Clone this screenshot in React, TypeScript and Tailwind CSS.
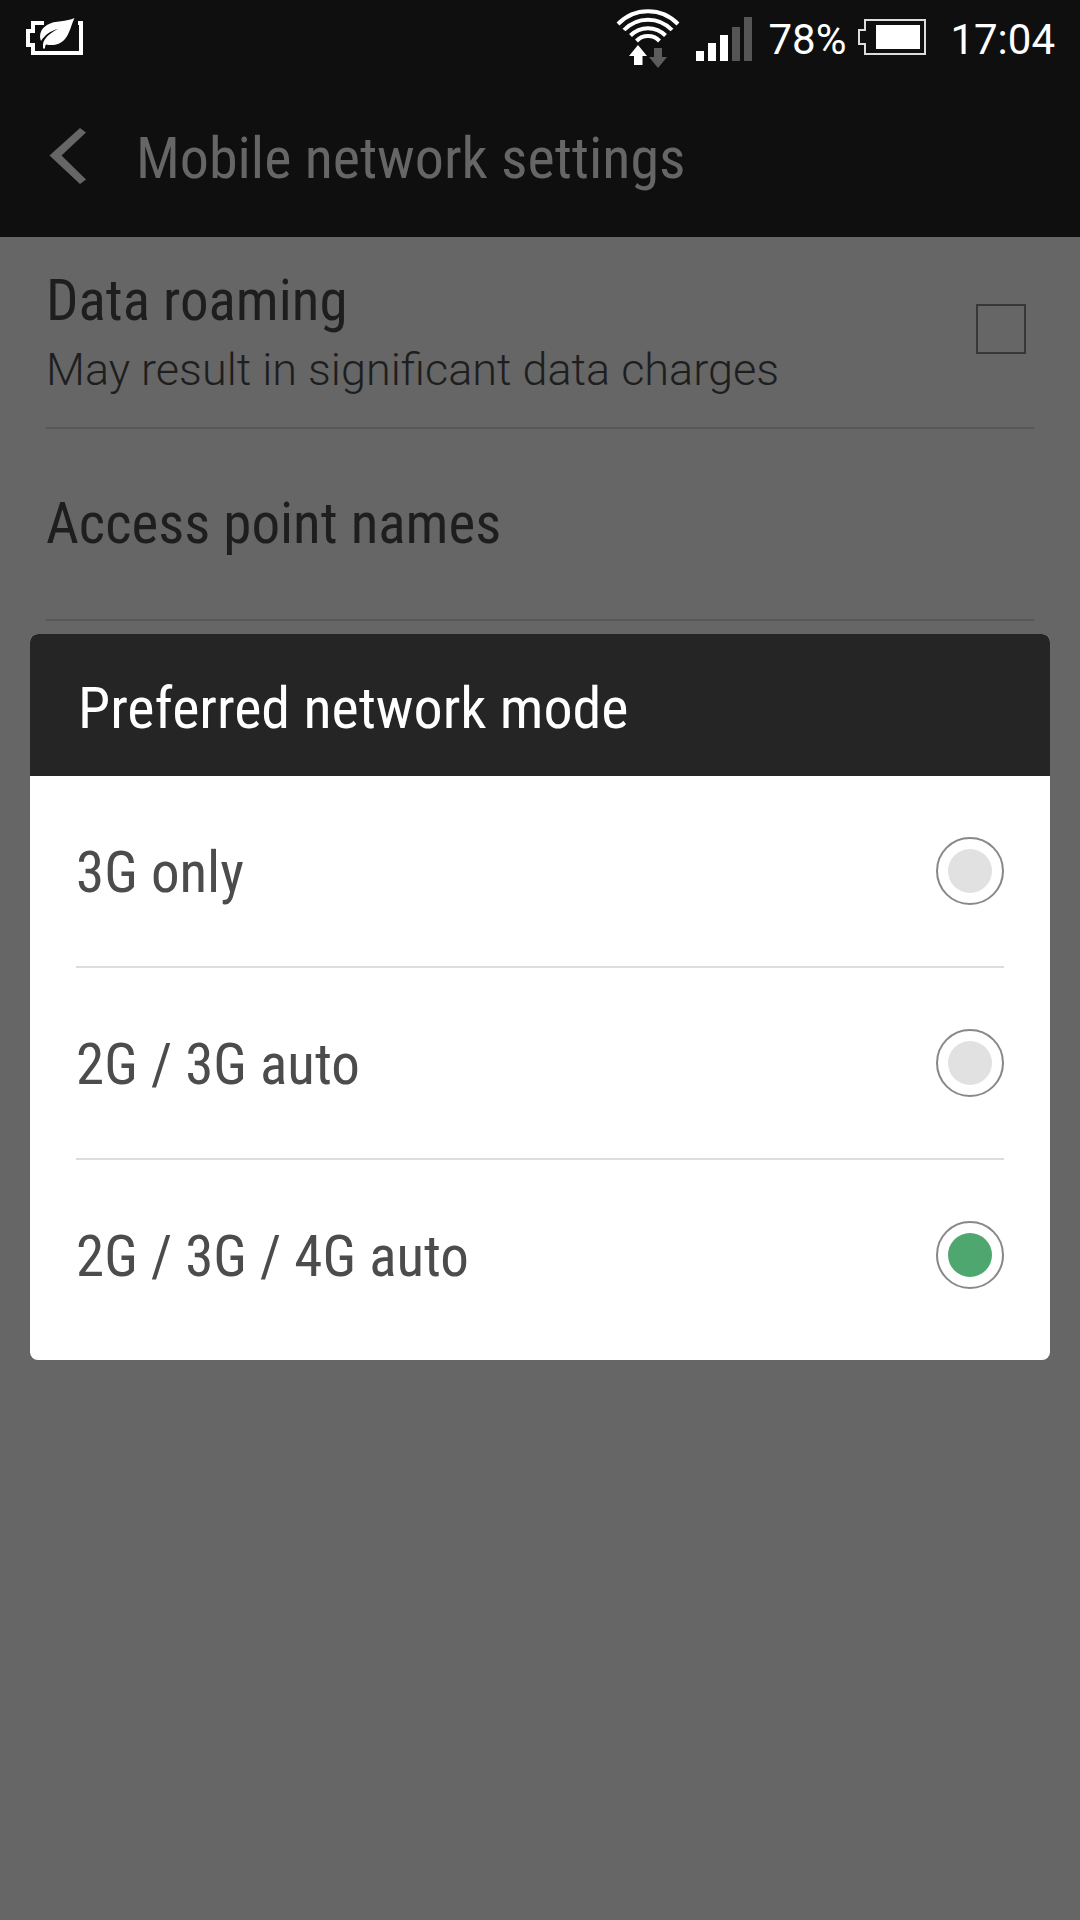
import { useState } from 'react';

const MODES = ['3G only', '2G / 3G auto', '2G / 3G / 4G auto'];

function PowerSaverIcon() {
  return (
    <svg width="60" height="40" viewBox="0 0 60 40" fill="none" aria-hidden="true">
      <path d="M20 6H9V14H4V28H9V36H57V6H54" stroke="#fff" strokeWidth="4" />
      <path
        d="M50.500 1C43 5 31 3 23 8C16 12 15 19 17 24C21 18 26 14 34 12C26 16 20 21 19 27V31.500H21C21 30 21 29 22 27.500C29 29 36 28 41 22C46 16 47 8 50.500 1Z"
        fill="#fff"
      />
    </svg>
  );
}

function WifiIcon() {
  return (
    <svg width="64" height="62" viewBox="0 0 64 62" fill="none" aria-hidden="true">
      <g stroke="#fff" strokeWidth="4">
        <path d="M2 18A41.500 41.500 0 0 1 62 18" />
        <path d="M8 24A33 33 0 0 1 56 24" />
        <path d="M14.500 29.500A24.500 24.500 0 0 1 49.500 29.500" />
        <path d="M20.500 35A16 16 0 0 1 43.500 35" />
      </g>
      <path d="M22 39L31 50H26.500V59H18V50H13Z" fill="#fff" />
      <path d="M42 62L51 51H46V42H38V51H33Z" fill="#5c5c5c" />
    </svg>
  );
}

function SignalIcon() {
  return (
    <svg width="56" height="44" viewBox="0 0 56 44" aria-hidden="true">
      <path d="M0 34h8v10H0zM12 26h8v18h-8zM24 18h8v26h-8z" fill="#fff" />
      <path d="M36 10h8v34h-8zM48 0h8v44h-8z" fill="#555" />
    </svg>
  );
}

function BatteryIcon() {
  return (
    <svg width="68" height="36" viewBox="0 0 68 36" fill="none" aria-hidden="true">
      <path d="M7 1H67V35H7V25H1V11H7Z" stroke="#ddd" strokeWidth="2" />
      <path d="M18 6h44v24H18z" fill="#fff" />
    </svg>
  );
}

function StatusBar() {
  return (
    <div className="flex h-[75px] items-center justify-between bg-[#0f0f0f] pr-[25px] pb-0.5 pl-6 font-['Roboto',sans-serif] text-[42px] leading-none text-white">
      <PowerSaverIcon />
      <div className="flex items-center">
        <WifiIcon />
        <div className="ml-4 pt-1">
          <SignalIcon />
        </div>
        <span className="ml-4 pt-1.5">78%</span>
        <div className="ml-3">
          <BatteryIcon />
        </div>
        <time className="ml-6 pt-1.5">17:04</time>
      </div>
    </div>
  );
}

export default function App() {
  const [roaming, setRoaming] = useState(false);
  const [mode, setMode] = useState(MODES[2]);

  return (
    <div className="relative flex min-h-screen flex-col bg-[#666] font-['Roboto_Condensed','Roboto',sans-serif] text-[58px] leading-[68px]">
      <StatusBar />

      {/* Title bar */}
      <header className="flex h-[162px] items-center bg-[#0f0f0f] pl-12 text-[#666]">
        <button type="button" aria-label="Back" className="mr-12">
          <svg width="40" height="58" viewBox="0 0 40 58" aria-hidden="true">
            <path d="M1.500 28.500L32 1L38 5.500L13.500 28.500L38 52.500L32 57Z" fill="currentColor" />
          </svg>
        </button>
        <h1 className="pt-1">Mobile network settings</h1>
      </header>

      {/* Settings list */}
      <main className="px-[46px] text-[57px] text-[#1e1e1e]">
        <label className="flex h-48 items-center justify-between border-b-2 border-[#585858] pr-2 pb-1.5">
          <span className="flex flex-col pt-3.5">
            <span>Data roaming</span>
            <span className="font-['Roboto',sans-serif] text-[45px] leading-[70px] font-light">
              May result in significant data charges
            </span>
          </span>
          <input
            type="checkbox"
            checked={roaming}
            onChange={(e) => setRoaming(e.target.checked)}
            className="size-[50px] appearance-none border-2 border-[#383838] checked:bg-[#383838]"
          />
        </label>
        <a href="#apn" className="flex h-48 items-center border-b-2 border-[#585858]">
          Access point names
        </a>
      </main>

      {/* Network mode dialog */}
      <div className="absolute inset-x-0 top-[74px] bottom-0 flex items-center px-[30px]">
        <div
          role="dialog"
          aria-labelledby="mode-title"
          className="w-full overflow-hidden rounded-lg bg-white pb-2"
        >
          <h2 id="mode-title" className="flex h-[142px] items-center bg-[#252525] px-12 pt-1.5 text-white">
            Preferred network mode
          </h2>
          <div role="radiogroup" aria-labelledby="mode-title" className="px-[46px] text-[57px] text-[#4c4c4c]">
            {MODES.map((name) => (
              <label
                key={name}
                className="flex h-48 items-center justify-between border-b-2 border-[#ddd] last:border-transparent"
              >
                <span className="pt-1">{name}</span>
                <input
                  type="radio"
                  name="mode"
                  checked={mode === name}
                  onChange={() => setMode(name)}
                  className="size-[68px] appearance-none rounded-full border-2 border-[#888] bg-[#e1e1e1] bg-clip-content p-2.5 checked:bg-[#4fa770]"
                />
              </label>
            ))}
          </div>
        </div>
      </div>
    </div>
  );
}
